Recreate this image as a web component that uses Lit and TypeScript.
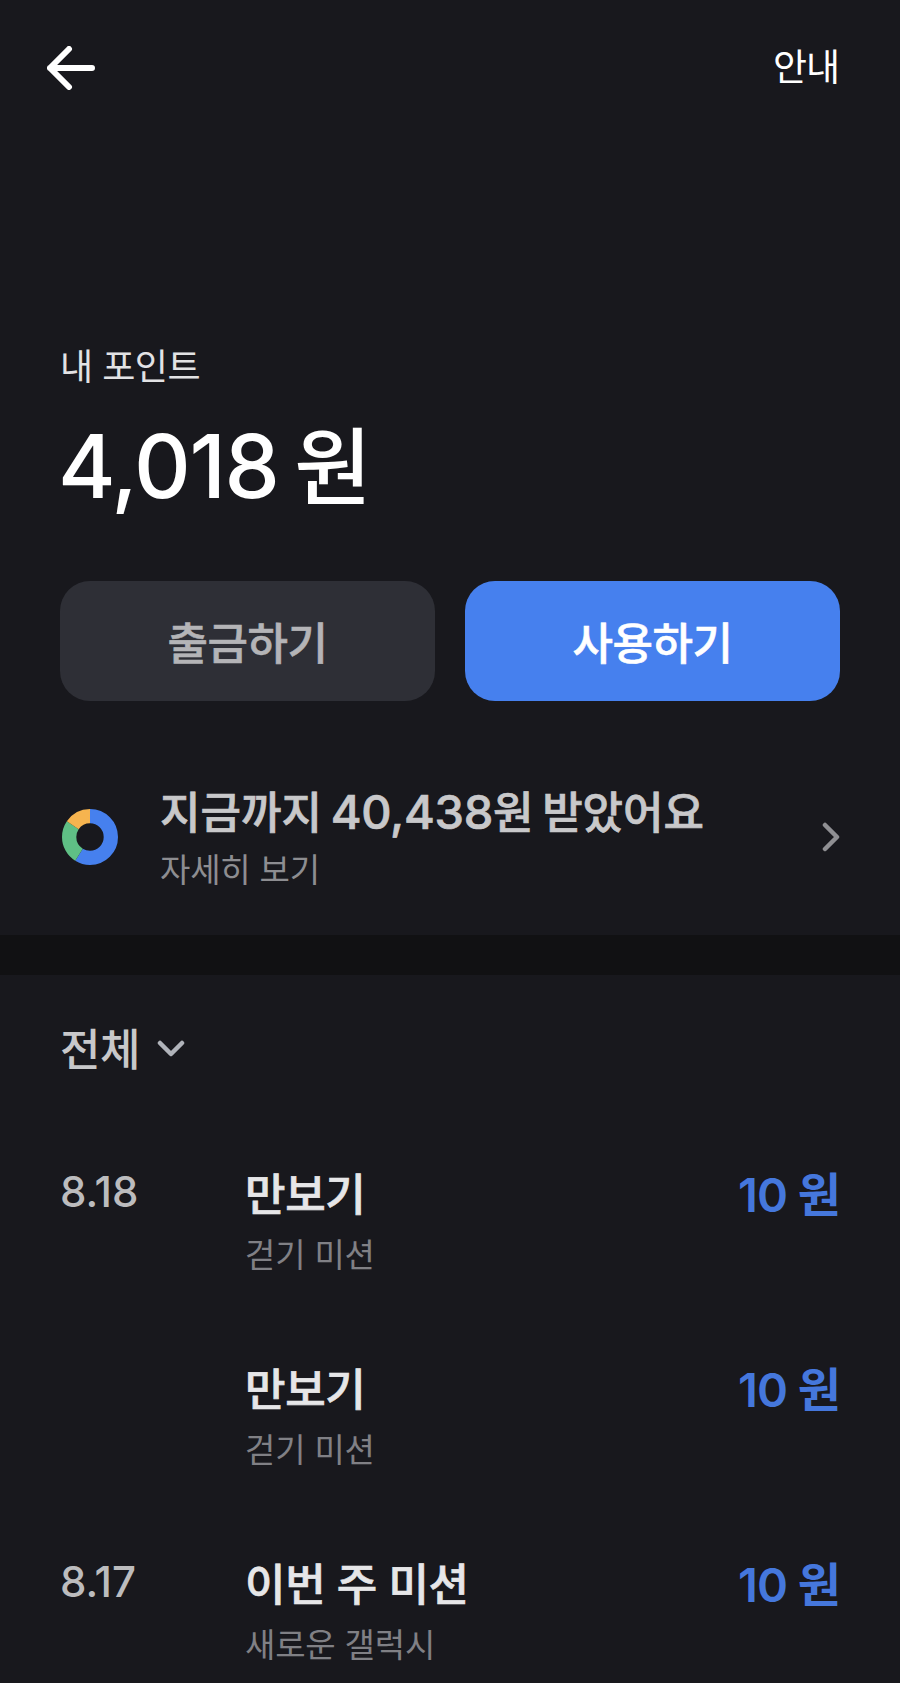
import { LitElement, html, svg, css } from "lit";
import { customElement } from "lit/decorators.js";

interface Row { date: string; title: string; sub: string; amount: string; }
const rows: Row[] = [
  { date: "8.18", title: "만보기", sub: "걷기 미션", amount: "10" },
  { date: "", title: "만보기", sub: "걷기 미션", amount: "10" },
  { date: "8.17", title: "이번 주 미션", sub: "새로운 갤럭시", amount: "10" },
];

@customElement("app-root")
export class AppRoot extends LitElement {
  static styles = css`
    :host { display: block; width: 900px; height: 1683px; overflow: hidden; background: #18181d; color: #fff;
      font-family: Inter, "Noto Sans CJK KR", sans-serif; }
    .top { display: flex; justify-content: space-between; align-items: center; height: 44px; padding: 46px 61px 0 47px; }
    .top svg { display: block; }
    .guide { font-size: 37px; line-height: 44px; letter-spacing: -1px; color: #fff; }
    .hero { padding: 255px 60px 0; }
    .label { font-size: 36px; line-height: 44px; letter-spacing: -0.5px; color: #e2e2e4; }
    .total { font-size: 88px; line-height: 100px; font-weight: 500; letter-spacing: -1.5px; word-spacing: -6px; margin: 27px 0 0 -2px; }
    .total span { font-size: 84px; letter-spacing: 0; }
    .btns { display: grid; grid-template-columns: 375px 375px; gap: 30px; margin-top: 63px; }
    .btn { height: 120px; border-radius: 30px; display: flex; align-items: center; justify-content: center;
      font-size: 44px; font-weight: 500; letter-spacing: -0.5px; -webkit-text-stroke: 0.6px currentColor; }
    .btn.gray { background: #2e2f36; color: #b4b4b7; }
    .btn.blue { background: #4680ee; color: #fff; }
    .summary { display: flex; align-items: center; padding: 0 60px; margin-top: 81px; height: 106px; }
    .donut { width: 60px; height: 60px; flex: none; margin-right: 40px; display: block; margin-top: 4px; }
    .sumtext { flex: 1; margin-top: 4px; }
    .chev { margin-top: 4px; }
    .sumtitle { font-size: 44px; line-height: 58px; font-weight: 500; letter-spacing: 0; word-spacing: -3px; color: #c8c8ca; -webkit-text-stroke: 0.7px currentColor; }
    .sumtitle span { font-size: 47px; letter-spacing: -0.3px; }
    .sumsub { font-size: 33px; line-height: 44px; letter-spacing: -0.2px; color: #8d8d91; margin-top: 6px; }
    .gap { height: 40px; background: #111113; margin-top: 47px; }
    .filter { display: flex; align-items: center; gap: 17px; padding: 42px 60px 0; height: 60px; font-size: 44px; font-weight: 500; letter-spacing: -0.5px; color: #c8c8ca; }
    .filter svg { margin-top: 4px; }
    .list { padding: 54px 60px 0; }
    .row { display: grid; grid-template-columns: 185px 1fr auto; height: 195px; align-items: start; padding-top: 36px; box-sizing: border-box; }
    .date { font-size: 42px; line-height: 50px; letter-spacing: 0; color: #bcbcbe; font-weight: 500; }
    .title { font-size: 44px; line-height: 56px; font-weight: 500; letter-spacing: -0.3px; color: #e6e6e8; -webkit-text-stroke: 0.7px currentColor; }
    .sub { font-size: 33px; line-height: 44px; letter-spacing: -0.2px; color: #808085; margin-top: 10px; }
    .amount { font-size: 47px; line-height: 56px; font-weight: 600; letter-spacing: -1px; color: #4577dc; }
  `;

  render() {
    const R = 20.85;
    const C = 2 * Math.PI * R;
    const seg = (color: string, from: number, to: number) => svg`<circle cx="30" cy="30" r=${R} fill="none"
      stroke=${color} stroke-width="14.3" stroke-dasharray="${(C * (to - from)).toFixed(2)} ${C.toFixed(2)}"
      stroke-dashoffset="${(-C * from).toFixed(2)}" transform="rotate(-90 30 30)"></circle>`;
    return html`
      <div class="top">
        <svg width="48" height="44" viewBox="0 0 48 44" fill="none" stroke="#fff" stroke-width="6" stroke-linecap="round" stroke-linejoin="round">
          <path d="M3 22H45M22 3L3 22L22 41"></path>
        </svg>
        <span class="guide">안내</span>
      </div>
      <section class="hero">
        <div class="label">내 포인트</div>
        <div class="total">4,018 <span>원</span></div>
        <div class="btns">
          <div class="btn gray">출금하기</div>
          <div class="btn blue">사용하기</div>
        </div>
      </section>
      <section class="summary">
        <svg class="donut" viewBox="0 0 60 60">
          ${seg("#4680ee", 0, 0.585)}${seg("#5fbf85", 0.585, 0.84)}${seg("#f6b44f", 0.84, 1)}
        </svg>
        <div class="sumtext">
          <div class="sumtitle">지금까지 <span>40,438</span>원 받았어요</div>
          <div class="sumsub">자세히 보기</div>
        </div>
        <svg class="chev" width="18" height="30" viewBox="0 0 18 30" fill="none" stroke="#8f8f93" stroke-width="4.5" stroke-linecap="round" stroke-linejoin="round">
          <path d="M3 3L15 15L3 27"></path>
        </svg>
      </section>
      <div class="gap"></div>
      <div class="filter">
        <span>전체</span>
        <svg width="28" height="18" viewBox="0 0 28 18" fill="none" stroke="#b0b3ba" stroke-width="4.5" stroke-linecap="round" stroke-linejoin="round">
          <path d="M3 3L14 14L25 3"></path>
        </svg>
      </div>
      <div class="list">
        ${rows.map((r) => html`
          <div class="row">
            <div class="date">${r.date}</div>
            <div>
              <div class="title">${r.title}</div>
              <div class="sub">${r.sub}</div>
            </div>
            <div class="amount">${r.amount} 원</div>
          </div>`)}
      </div>
    `;
  }
}
